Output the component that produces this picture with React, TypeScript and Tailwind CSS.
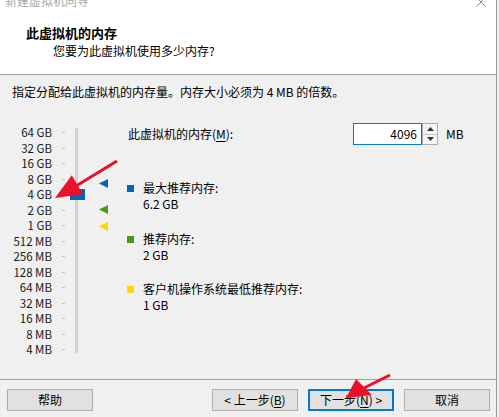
const LABELS = ['64 GB', '32 GB', '16 GB', '8 GB', '4 GB', '2 GB', '1 GB', '512 MB', '256 MB', '128 MB', '64 MB', '32 MB', '16 MB', '8 MB', '4 MB'];

function MemorySlider() {
  return (
    <div className="relative w-[120px] h-[236px] flex">
      <div className="w-[52px] pt-[2px] flex flex-col">
        {LABELS.map((l) => (
          <div key={l} className="h-[15.5px] leading-[15.5px] text-right text-[11.5px] text-[#1a1a1a] whitespace-nowrap">
            {l}
          </div>
        ))}
      </div>
      <div className="ml-[10px] pt-[2px] flex flex-col">
        {LABELS.map((l) => (
          <div key={l} className="h-[15.5px] flex items-center">
            <div className="w-[3px] h-px bg-[#c4c4c4]" />
          </div>
        ))}
      </div>
      {/* track */}
      <div className="absolute left-[75px] top-[5px] w-[3px] h-[225px] bg-[#dadada] border-x border-[#cfcfcf]" />
      {/* thumb */}
      <div className="absolute left-[70px] top-[66px] w-[15px] h-[11px] bg-[#0a64b4]" />
      {/* markers */}
      <svg className="absolute left-[99px] top-[56px]" width="10" height="9" viewBox="0 0 10 9">
        <polygon points="0,4.5 9,0 9,9" fill="#0a64b4" />
      </svg>
      <svg className="absolute left-[99px] top-[82px]" width="10" height="9" viewBox="0 0 10 9">
        <polygon points="0,4.5 9,0 9,9" fill="#4a9a16" />
      </svg>
      <svg className="absolute left-[99px] top-[99px]" width="10" height="9" viewBox="0 0 10 9">
        <polygon points="0,4.5 9,0 9,9" fill="#ffd200" />
      </svg>
    </div>
  );
}

function Legend({ color, title, value, className }: { color: string; title: string; value: string; className?: string }) {
  return (
    <div className={`leading-[16px] ${className ?? ''}`}>
      <div className="flex items-center">
        <span className={`w-[7px] h-[7px] mr-[9px] ${color}`} />
        <span>{title}</span>
      </div>
      <div className="pl-[16px]">{value}</div>
    </div>
  );
}

function Btn({ children, primary, className }: { children: React.ReactNode; primary?: boolean; className?: string }) {
  return (
    <button
      type="button"
      className={`h-[22px] w-[86px] bg-[#e1e1e1] text-[12px] leading-none text-black flex items-center justify-center ${
        primary ? 'border-2 border-[#0078d7]' : 'border border-[#adadad]'
      } ${className ?? ''}`}
    >
      {children}
    </button>
  );
}

export default function App() {
  return (
    <div
      className="relative w-[499px] h-[417px] overflow-hidden bg-[#f0f0f0] text-[12px] text-black"
      style={{ fontFamily: '"Noto Sans CJK SC", "Noto Sans", sans-serif' }}
    >
      <div className="w-[497px] h-full flex flex-col border-r border-[#9a9a9a]">
        {/* header */}
        <div className="relative h-[75px] bg-white border-b border-[#a0a0a0] shrink-0">
          <div className="absolute left-[5px] top-[-8px] text-[12px] text-[#a8a8a8]">新建虚拟机向导</div>
          <svg className="absolute left-[476px] top-[-3px]" width="10" height="10" viewBox="0 0 10 10">
            <path d="M0.5 0.5 L9.5 9.5 M9.5 0.5 L0.5 9.5" stroke="#8a8a8a" strokeWidth="1" />
          </svg>
          <div className="pl-[26px] pt-[24px] text-[13px] font-bold leading-[18px]">此虚拟机的内存</div>
          <div className="pl-[53px] mt-[1px] leading-[16px]">您要为此虚拟机使用多少内存?</div>
        </div>

        {/* body */}
        <div className="flex-1 flex flex-col">
          <div className="pl-[12px] pt-[9px] leading-[16px]">指定分配给此虚拟机的内存量。内存大小必须为 4 MB 的倍数。</div>
          <div className="flex mt-[23px]">
            <MemorySlider />
            <div className="ml-[7px] flex flex-col">
              <div className="flex items-center h-[22px]">
                <span className="w-[226px] pl-px">
                  此虚拟机的内存(<span className="underline underline-offset-2">M</span>):
                </span>
                <div className="w-[69px] h-[22px] bg-white border border-[#0078d7] flex items-center justify-end pr-[4px]">4096</div>
                <div className="w-[16px] h-[22px] flex flex-col border border-[#adadad] bg-[#f5f5f5]">
                  <div className="flex-1 flex items-center justify-center border-b border-[#c8c8c8]">
                    <svg width="7" height="4" viewBox="0 0 7 4"><polygon points="0,4 3.5,0 7,4" fill="#333" /></svg>
                  </div>
                  <div className="flex-1 flex items-center justify-center">
                    <svg width="7" height="4" viewBox="0 0 7 4"><polygon points="0,0 3.5,4 7,0" fill="#333" /></svg>
                  </div>
                </div>
                <span className="ml-[8px]">MB</span>
              </div>
              <Legend className="mt-[35px]" color="bg-[#0a64b4]" title="最大推荐内存:" value="6.2 GB" />
              <Legend className="mt-[19px]" color="bg-[#4a9a16]" title="推荐内存:" value="2 GB" />
              <Legend className="mt-[18px]" color="bg-[#ffd800]" title="客户机操作系统最低推荐内存:" value="1 GB" />
            </div>
          </div>
        </div>

        {/* footer */}
        <div className="h-[38px] shrink-0 border-t border-[#a0a0a0] flex items-start pt-[9px] pl-[7px]">
          <Btn>帮助</Btn>
          <Btn className="ml-[119px]">
            &lt; 上一步(<span className="underline underline-offset-2">B</span>)
          </Btn>
          <Btn primary className="ml-[10px]">
            下一步(<span className="underline underline-offset-2">N</span>) &gt;
          </Btn>
          <Btn className="ml-[10px]">取消</Btn>
        </div>
      </div>

      {/* red annotation arrows */}
      <svg className="absolute inset-0 pointer-events-none" width="499" height="417" viewBox="0 0 499 417">
        <line x1="117" y1="161" x2="76" y2="186" stroke="#e8102a" strokeWidth="3" />
        <polygon points="55,198 71.8,175.2 83,194.2" fill="#e8102a" />
        <line x1="390" y1="375" x2="362" y2="389" stroke="#e8102a" strokeWidth="3" />
        <polygon points="346,398 356,379 372,395" fill="#e8102a" />
      </svg>
    </div>
  );
}
